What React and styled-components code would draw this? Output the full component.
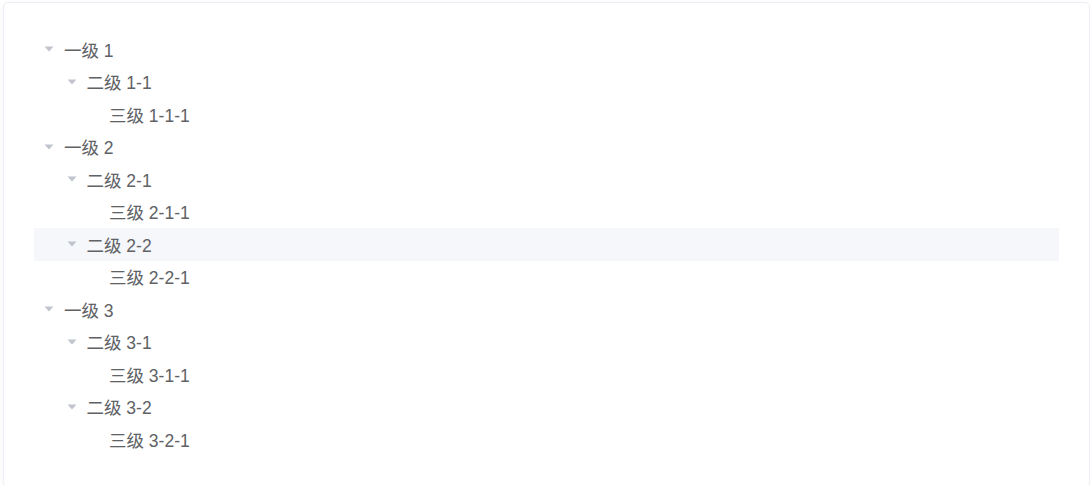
import React from 'react'
import styled, { createGlobalStyle } from 'styled-components'

const GlobalStyle = createGlobalStyle`
    body {
        margin: 0;
        background: #fff;
        font-family: 'Liberation Sans', 'Noto Sans CJK SC', sans-serif;
    }
`

const Page = styled.div`
    padding: 2px 0 0 3px;
    overflow: hidden;
    height: 485px;
    box-sizing: border-box;
`

const Card = styled.div`
    width: 1087px;
    box-sizing: border-box;
    border: 1px solid #ebeef5;
    border-radius: 5px;
    background: #fff;
    box-shadow: 0 2px 12px 0 rgba(0, 0, 0, 0.04);
    padding: 30px;
`

const Row = styled.div`
    display: flex;
    align-items: center;
    height: 32.5px;
    padding-left: ${p => p.level * 22.5}px;
    background: ${p => (p.active ? '#f5f7fa' : 'transparent')};
    color: #606266;
    font-size: 17.5px;
    cursor: pointer;
`

const Caret = styled.span`
    width: 30px;
    height: 100%;
    display: flex;
    align-items: center;
    justify-content: center;
    flex-shrink: 0;

    svg {
        visibility: ${p => (p.leaf ? 'hidden' : 'visible')};
    }
`

const Label = styled.span`
    white-space: nowrap;
`

const data = [
    { label: '一级 1', children: [
        { label: '二级 1-1', children: [{ label: '三级 1-1-1' }] },
    ] },
    { label: '一级 2', children: [
        { label: '二级 2-1', children: [{ label: '三级 2-1-1' }] },
        { label: '二级 2-2', active: true, children: [{ label: '三级 2-2-1' }] },
    ] },
    { label: '一级 3', children: [
        { label: '二级 3-1', children: [{ label: '三级 3-1-1' }] },
        { label: '二级 3-2', children: [{ label: '三级 3-2-1' }] },
    ] },
]

function Node({ node, level }) {
    const leaf = !node.children
    return (
        <>
            <Row level={level} active={node.active}>
                <Caret leaf={leaf}>
                    <svg width="10" height="6" viewBox="0 0 10 6">
                        <path d="M0.5 0.5 L9.5 0.5 L5 5.5 Z" fill="#c0c4cc" />
                    </svg>
                </Caret>
                <Label>{node.label}</Label>
            </Row>
            {!leaf && node.children.map(child => (
                <Node key={child.label} node={child} level={level + 1} />
            ))}
        </>
    )
}

export default function App() {
    return (
        <Page>
            <GlobalStyle />
            <Card>
                {data.map(n => <Node key={n.label} node={n} level={0} />)}
            </Card>
        </Page>
    )
}
